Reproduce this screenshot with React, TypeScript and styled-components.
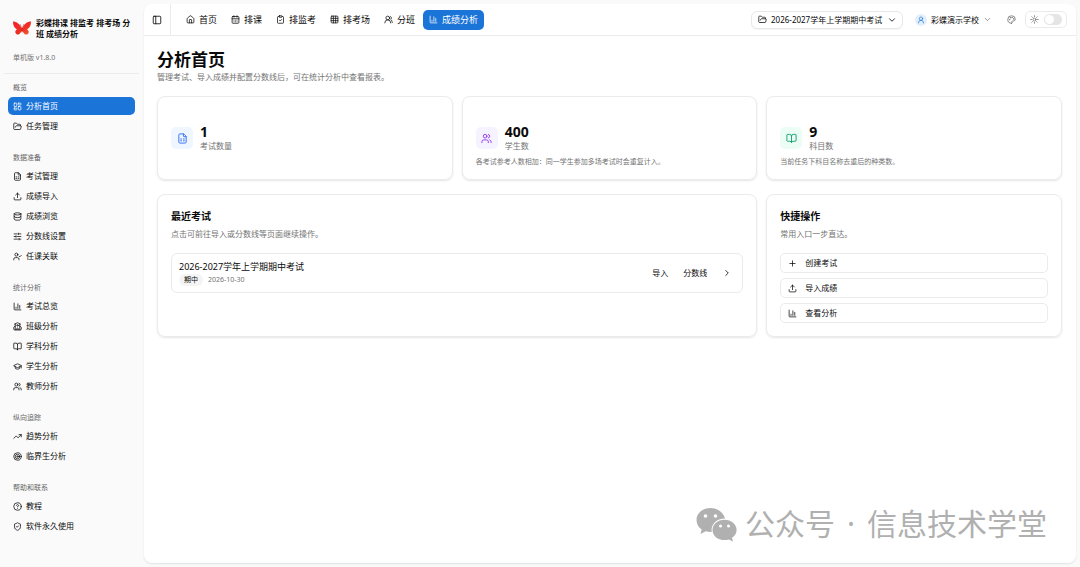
import React from "react";
import styled, { createGlobalStyle, css } from "styled-components";
import {
  BookOpen, CalendarDays, ChartColumn, ChevronDown, ChevronRight, CircleHelp, ClipboardCheck,
  Database, FileSpreadsheet, FolderOpen, GraduationCap, Grid3x3, House, LayoutDashboard, Palette, PanelLeft,
  Plus, School, ShieldCheck, SlidersHorizontal, Sun, Target, TrendingUp, Upload, UserCheck, UserRound, Users, UsersRound,
  type LucideIcon,
} from "lucide-react";

const GlobalStyle = createGlobalStyle`
  *, *::before, *::after { box-sizing: border-box; }
  body {
    margin: 0;
    background: #fafafa;
    color: #0a0a0a;
    font-family: "Noto Sans", "Noto Sans CJK SC", sans-serif;
    font-size: 8px;
    line-height: 12px;
  }
  h1, h2, p, ul { margin: 0; padding: 0; }
  ul { list-style: none; }
  button, input, select { font: inherit; color: inherit; margin: 0; }
  button { border: 0; background: none; padding: 0; cursor: pointer; }
  a { color: inherit; text-decoration: none; }
  svg { flex-shrink: 0; display: block; }
`;

const Shell = styled.div`
  display: flex;
  min-height: 100vh;
`;

const Sidebar = styled.aside`
  flex: 0 0 144px;
  padding: 4px 5px 4px 4px;
`;

const Brand = styled.div`
  display: flex;
  align-items: center;
  gap: 5px;
  padding: 13px 4px 0 9px;
  font-weight: 700;
  line-height: 11px;
`;

const Version = styled.p`
  padding: 13px 9px 9px;
  color: #737373;
  font-size: 7px;
  border-bottom: 1px solid #ebebeb;
`;

const Menu = styled.nav`
  display: flex;
  flex-direction: column;
  gap: 14px;
  padding: 5px 4px 0;
`;

const MenuLabel = styled.h2`
  padding: 0 5px;
  color: #666;
  font-size: 7px;
  font-weight: 400;
  line-height: 18px;
`;

const MenuList = styled.ul`
  display: grid;
  gap: 2px;
`;

const MenuLink = styled.a<{ $active?: boolean }>`
  display: flex;
  align-items: center;
  gap: 4px;
  height: 18px;
  padding: 0 5px;
  border-radius: 5px;
  ${(p) => p.$active && css`
    background: #1b74d8;
    color: #fff;
  `}
`;

const Panel = styled.div`
  position: relative;
  flex: 1;
  min-width: 0;
  margin: 4px 4px 4px 0;
  border-radius: 8px;
  background: #fff;
  box-shadow: 0 1px 2px rgba(0, 0, 0, 0.1);
`;

const TopBar = styled.header`
  display: flex;
  align-items: center;
  height: 32px;
  padding-right: 9px;
  border-bottom: 1px solid #ebebeb;
`;

const CollapseButton = styled.button`
  display: grid;
  place-items: center;
  align-self: stretch;
  width: 27px;
  border-right: 1px solid #ebebeb;
`;

const Tabs = styled.nav`
  display: flex;
  flex: 1;
  gap: 2px;
  padding-left: 9px;
`;

const Tab = styled.a<{ $active?: boolean }>`
  display: flex;
  align-items: center;
  gap: 4px;
  height: 20px;
  padding: 0 6px;
  border-radius: 5px;
  font-size: 9px;
  white-space: nowrap;
  ${(p) => p.$active && css`
    background: #1b74d8;
    color: #fff;
  `}
`;

const TaskPicker = styled.label`
  display: flex;
  align-items: center;
  gap: 4px;
  height: 18px;
  padding: 0 5px 0 6px;
  border: 1px solid #e8e8e8;
  border-radius: 6px;
  box-shadow: 0 1px 1px rgba(0, 0, 0, 0.04);
  select {
    appearance: none;
    padding: 0;
    border: 0;
    background: none;
    line-height: 14px;
  }
`;

const AccountButton = styled.button`
  display: flex;
  align-items: center;
  gap: 4px;
  margin-left: 12px;
`;

const Avatar = styled.span`
  display: grid;
  place-items: center;
  width: 12px;
  height: 12px;
  border-radius: 50%;
  background: #e3effb;
  color: #1b74d8;
`;

const IconButton = styled.button`
  margin: 0 9px 0 15px;
  color: #666;
`;

const ThemeSwitch = styled.label`
  display: flex;
  align-items: center;
  gap: 5px;
  height: 17px;
  padding: 0 4px;
  border: 1px solid #ebebeb;
  border-radius: 5px;
  color: #666;
`;

const Switch = styled.input`
  appearance: none;
  width: 18px;
  height: 11px;
  padding: 1px;
  border-radius: 6px;
  background: #e5e5e5;
  &::before {
    content: "";
    display: block;
    width: 9px;
    height: 9px;
    border-radius: 50%;
    background: #fff;
  }
  &:checked { background: #1b74d8; }
  &:checked::before { margin-left: 7px; }
`;

const Content = styled.main`
  padding: 13px 14px 26px 13px;
`;

const PageTitle = styled.h1`
  font-size: 17px;
  line-height: 22px;
`;

const Muted = styled.p<{ $small?: boolean }>`
  color: #737373;
  font-size: ${(p) => (p.$small ? 7 : 8)}px;
`;

const Grid = styled.div`
  display: grid;
  grid-template-columns: repeat(3, minmax(0, 1fr));
  gap: 14px 9px;
  margin-top: 13px;
`;

const Card = styled.section<{ $wide?: boolean }>`
  grid-column: span ${(p) => (p.$wide ? 2 : 1)};
  padding: 13px;
  border: 1px solid #ebebeb;
  border-radius: 8px;
  box-shadow: 0 1px 2px rgba(0, 0, 0, 0.1);
`;

const StatCard = styled(Card)`
  padding: 27px 13px 11px;
`;

const StatHead = styled.div`
  display: flex;
  align-items: center;
  gap: 7px;
  margin-bottom: 4px;
`;

const StatIcon = styled.span<{ $color: string; $tint: string }>`
  display: grid;
  place-items: center;
  width: 22px;
  height: 22px;
  border-radius: 5px;
  color: ${(p) => p.$color};
  background: ${(p) => p.$tint};
`;

const StatValue = styled.p`
  font-size: 14px;
  font-weight: 700;
  line-height: 16px;
`;

const CardTitle = styled.h2`
  margin-bottom: 4px;
  font-size: 10px;
  line-height: 16px;
`;

const ExamRow = styled.div`
  display: flex;
  align-items: center;
  justify-content: space-between;
  margin-top: 13px;
  padding: 6px 7px;
  border: 1px solid #ebebeb;
  border-radius: 6px;
`;

const ExamName = styled.p`
  font-size: 9px;
  line-height: 14px;
`;

const ExamMeta = styled.div`
  display: flex;
  align-items: center;
  gap: 5px;
`;

const Tag = styled.span`
  padding: 0 5px;
  border-radius: 6px;
  background: #f4f4f4;
  font-size: 7px;
`;

const RowActions = styled.div`
  display: flex;
  align-items: center;
  gap: 15px;
  padding-right: 3px;
`;

const ActionList = styled.div`
  display: grid;
  gap: 5px;
  margin-top: 13px;
`;

const ActionButton = styled.button`
  display: flex;
  align-items: center;
  gap: 8px;
  height: 20px;
  padding: 0 7px;
  border: 1px solid #ebebeb;
  border-radius: 5px;
`;

const Signature = styled.div`
  position: absolute;
  right: 29px;
  bottom: 19px;
  display: flex;
  align-items: center;
  gap: 8px;
  color: #b0b0b0;
  font-size: 30px;
  line-height: 40px;
  white-space: nowrap;
`;

const SignatureName = styled.span`
  display: flex;
  gap: 12px;
`;

type Entry = { text: string; icon: LucideIcon; active?: boolean };

const groups: { label: string; items: Entry[] }[] = [
  { label: "概览", items: [
    { text: "分析首页", icon: LayoutDashboard, active: true },
    { text: "任务管理", icon: FolderOpen },
  ] },
  { label: "数据准备", items: [
    { text: "考试管理", icon: FileSpreadsheet },
    { text: "成绩导入", icon: Upload },
    { text: "成绩浏览", icon: Database },
    { text: "分数线设置", icon: SlidersHorizontal },
    { text: "任课关联", icon: UserCheck },
  ] },
  { label: "统计分析", items: [
    { text: "考试总览", icon: ChartColumn },
    { text: "班级分析", icon: School },
    { text: "学科分析", icon: BookOpen },
    { text: "学生分析", icon: GraduationCap },
    { text: "教师分析", icon: Users },
  ] },
  { label: "纵向追踪", items: [
    { text: "趋势分析", icon: TrendingUp },
    { text: "临界生分析", icon: Target },
  ] },
  { label: "帮助和联系", items: [
    { text: "教程", icon: CircleHelp },
    { text: "软件永久使用", icon: ShieldCheck },
  ] },
];

const tabs: Entry[] = [
  { text: "首页", icon: House },
  { text: "排课", icon: CalendarDays },
  { text: "排监考", icon: ClipboardCheck },
  { text: "排考场", icon: Grid3x3 },
  { text: "分班", icon: UsersRound },
  { text: "成绩分析", icon: ChartColumn, active: true },
];

const stats = [
  { value: "1", label: "考试数量", icon: FileSpreadsheet, color: "#2f6df0", tint: "#eff6ff" },
  { value: "400", label: "学生数", icon: Users, color: "#9333ea", tint: "#f5f3ff",
    note: "各考试参考人数相加：同一学生参加多场考试时会重复计入。" },
  { value: "9", label: "科目数", icon: BookOpen, color: "#10a070", tint: "#ecfdf5",
    note: "当前任务下科目名称去重后的种类数。" },
];

const actions: Entry[] = [
  { text: "创建考试", icon: Plus },
  { text: "导入成绩", icon: Upload },
  { text: "查看分析", icon: ChartColumn },
];

const Butterfly = () => (
  <svg width="18" height="18" viewBox="0 0 36 36" aria-hidden="true">
    <defs>
      <linearGradient id="wing" x1="0" y1="0" x2="1" y2="1">
        <stop offset="0" stopColor="#f5222d" />
        <stop offset="0.6" stopColor="#ee3024" />
        <stop offset="1" stopColor="#f4703a" />
      </linearGradient>
    </defs>
    <path fill="url(#wing)" d="M17 18C13 9 6 5 0 5c0 7 2 13 8 16-3 1-4 4-3 7 3 5 8 4 11-2l2-2 2 2c3 6 9 7 11 2 1-3 0-6-3-7 6-3 8-9 8-16-7 0-13 4-17 13l-1-1z" />
    <path d="M17 17 14 10M19 17 22 10M18 17v10" stroke="#b3131b" strokeWidth="1" fill="none" />
  </svg>
);

const ChatBubbles = () => (
  <svg width="41" height="35" viewBox="0 0 41 35" aria-hidden="true">
    <path fill="currentColor" d="M14.500 1C6.500 1 .5 6.200.5 13c0 4 2 7.300 5.200 9.500L4.500 27l5.200-2.700c2 .6 4 .8 6 .7C14.500 17.500 20.500 11.500 29 11.500 27.500 5.500 21.500 1 14.500 1z" />
    <path fill="currentColor" d="M28.500 12.800c-6.800 0-12 4.500-12 10.100s5.200 10.100 12 10.100c1.500 0 2.900-.2 4.200-.6l4.300 2.200-1-3.800c2.800-1.800 4.600-4.700 4.600-7.900 0-5.600-5.300-10.100-12.100-10.100z" />
    <g fill="#fff">
      <circle cx="9.500" cy="9" r="1.800" />
      <circle cx="19.500" cy="9" r="1.800" />
      <circle cx="24.500" cy="19" r="1.500" />
      <circle cx="32.500" cy="19" r="1.500" />
    </g>
  </svg>
);

export default function App() {
  return (
    <>
      <GlobalStyle />
      <Shell>
        <Sidebar>
          <Brand>
            <Butterfly />
            <span>彩蝶排课 排监考 排考场 分班 成绩分析</span>
          </Brand>
          <Version>单机版 v1.8.0</Version>
          <Menu>
            {groups.map((group) => (
              <div key={group.label}>
                <MenuLabel>{group.label}</MenuLabel>
                <MenuList>
                  {group.items.map(({ text, icon: Icon, active }) => (
                    <li key={text}>
                      <MenuLink href="#" $active={active}><Icon size={9} />{text}</MenuLink>
                    </li>
                  ))}
                </MenuList>
              </div>
            ))}
          </Menu>
        </Sidebar>
        <Panel>
          <TopBar>
            <CollapseButton aria-label="收起侧栏"><PanelLeft size={10} /></CollapseButton>
            <Tabs>
              {tabs.map(({ text, icon: Icon, active }) => (
                <Tab key={text} href="#" $active={active}><Icon size={9} />{text}</Tab>
              ))}
            </Tabs>
            <TaskPicker>
              <FolderOpen size={9} />
              <select aria-label="任务">
                <option>2026-2027学年上学期期中考试</option>
              </select>
              <ChevronDown size={10} />
            </TaskPicker>
            <AccountButton>
              <Avatar><UserRound size={8} /></Avatar>
              <span>彩蝶演示学校</span>
              <ChevronDown size={9} color="#777" />
            </AccountButton>
            <IconButton aria-label="主题颜色"><Palette size={9} /></IconButton>
            <ThemeSwitch>
              <Sun size={9} />
              <Switch type="checkbox" role="switch" aria-label="深色模式" />
            </ThemeSwitch>
          </TopBar>
          <Content>
            <PageTitle>分析首页</PageTitle>
            <Muted>管理考试、导入成绩并配置分数线后，可在统计分析中查看报表。</Muted>
            <Grid>
              {stats.map(({ value, label, icon: Icon, color, tint, note }) => (
                <StatCard key={label}>
                  <StatHead>
                    <StatIcon $color={color} $tint={tint}><Icon size={11} /></StatIcon>
                    <div>
                      <StatValue>{value}</StatValue>
                      <Muted>{label}</Muted>
                    </div>
                  </StatHead>
                  {note && <Muted $small>{note}</Muted>}
                </StatCard>
              ))}
              <Card $wide>
                <CardTitle>最近考试</CardTitle>
                <Muted>点击可前往导入或分数线等页面继续操作。</Muted>
                <ExamRow>
                  <div>
                    <ExamName>2026-2027学年上学期期中考试</ExamName>
                    <ExamMeta>
                      <Tag>期中</Tag>
                      <Muted $small>2026-10-30</Muted>
                    </ExamMeta>
                  </div>
                  <RowActions>
                    <button>导入</button>
                    <button>分数线</button>
                    <button aria-label="查看详情"><ChevronRight size={10} /></button>
                  </RowActions>
                </ExamRow>
              </Card>
              <Card>
                <CardTitle>快捷操作</CardTitle>
                <Muted>常用入口一步直达。</Muted>
                <ActionList>
                  {actions.map(({ text, icon: Icon }) => (
                    <ActionButton key={text}><Icon size={9} />{text}</ActionButton>
                  ))}
                </ActionList>
              </Card>
            </Grid>
          </Content>
          <Signature>
            <ChatBubbles />
            <SignatureName>
              <span>公众号</span>
              <span>·</span>
              <span>信息技术学堂</span>
            </SignatureName>
          </Signature>
        </Panel>
      </Shell>
    </>
  );
}
